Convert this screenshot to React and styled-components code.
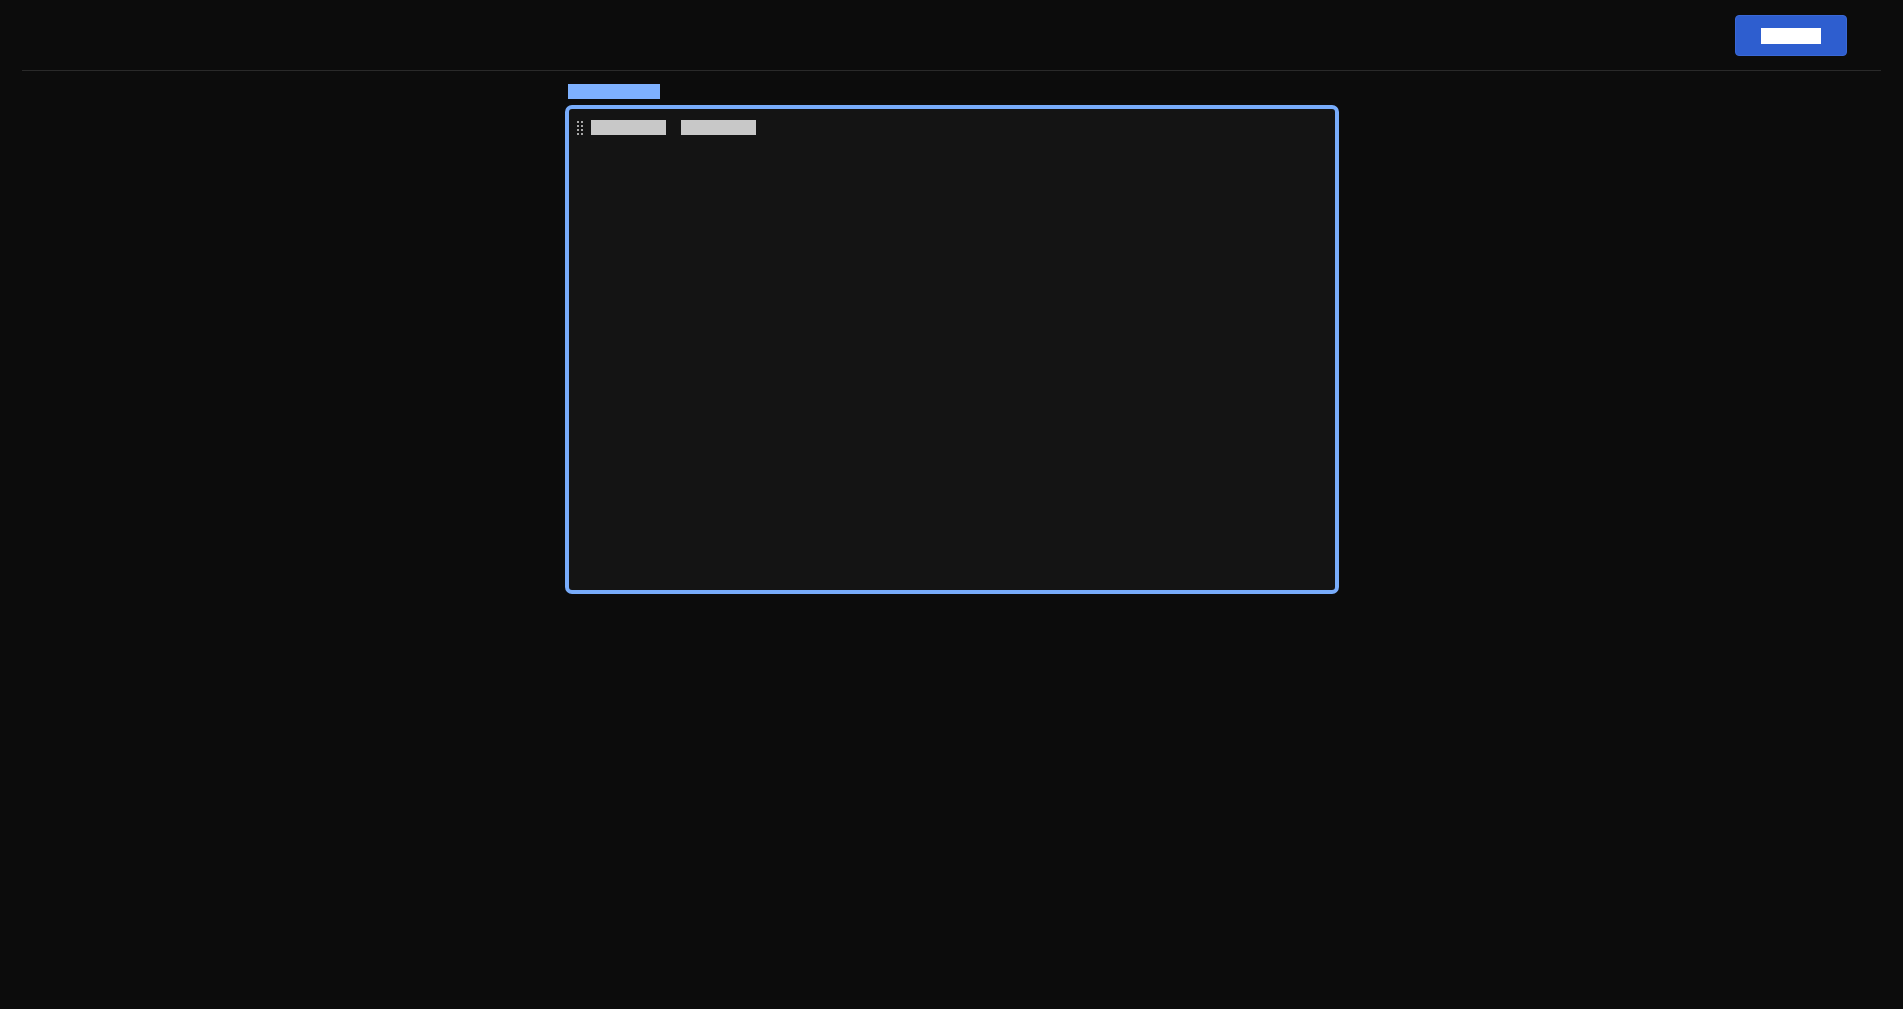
import React from "react";
import styled, { createGlobalStyle } from "styled-components";

const Global = createGlobalStyle`
  html, body { margin: 0; padding: 0; background: #0c0c0c; }
  body { font-family: "Liberation Sans", Arial, sans-serif; color: #ddd; }
  * { box-sizing: border-box; }
`;

const Page = styled.div`
  min-height: 1009px;
  background: #0c0c0c;
`;

const Header = styled.header`
  margin: 0 22px;
  padding: 15px 34px 14px 0;
  display: flex;
  justify-content: flex-end;
  border-bottom: 1px solid #2a2a2a;
`;

const PrimaryButton = styled.button`
  height: 41px;
  padding: 0 25px;
  display: flex;
  align-items: center;
  background: #2e5ecf;
  border: 1px solid #3a68d6;
  border-radius: 4px;
  cursor: pointer;
`;

const Redacted = styled.span`
  display: inline-block;
  width: ${(p) => p.$w}px;
  height: ${(p) => p.$h || 15}px;
  line-height: ${(p) => p.$h || 15}px;
  font-size: 12px;
  overflow: hidden;
  white-space: nowrap;
  color: ${(p) => p.$c};
  background: ${(p) => p.$c};
`;

const Main = styled.main`
  width: 774px;
  margin: 13px auto 0;
  display: flex;
  flex-direction: column;
  gap: 6px;
`;

const LabelRow = styled.div`
  padding-left: 3px;
  display: flex;
`;

const Editor = styled.section`
  height: 489px;
  border: 4px solid #78acfb;
  border-radius: 7px;
  background: #141414;
  padding: 11px 7px;
`;

const Row = styled.div`
  display: flex;
  align-items: flex-start;
  gap: 8px;
`;

const Grip = styled.svg`
  margin-top: 1px;
  flex: none;
`;

const Fields = styled.div`
  display: flex;
  gap: 15px;
`;

function GripIcon() {
  const dots = [];
  for (let r = 0; r < 4; r++) {
    for (let c = 0; c < 2; c++) {
      dots.push(<rect key={`${r}-${c}`} x={c * 4 + 1} y={r * 4} width="2" height="2" fill="#a8a8a8" />);
    }
  }
  return (
    <Grip width="7" height="14" viewBox="0 0 7 14">
      {dots}
    </Grip>
  );
}

export default function App() {
  return (
    <Page>
      <Global />
      <Header>
        <PrimaryButton>
          <Redacted $w={60} $h={16} $c="#ffffff">Save</Redacted>
        </PrimaryButton>
      </Header>
      <Main>
        <LabelRow>
          <Redacted $w={92} $c="#7eb1ff">Editor</Redacted>
        </LabelRow>
        <Editor>
          <Row>
            <GripIcon />
            <Fields>
              <Redacted $w={75} $c="#c8c8c8">Field one</Redacted>
              <Redacted $w={75} $c="#c8c8c8">Field two</Redacted>
            </Fields>
          </Row>
        </Editor>
      </Main>
    </Page>
  );
}
